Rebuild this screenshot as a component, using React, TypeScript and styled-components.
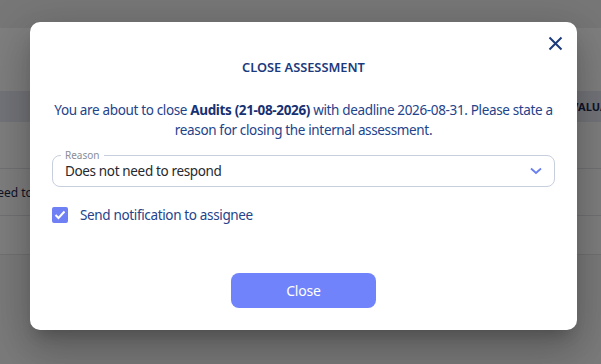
import React from "react";
import styled, { createGlobalStyle } from "styled-components";

/** Global */
const GlobalStyle = createGlobalStyle`
  html, body {
    margin: 0;
    padding: 0;
    width: 601px;
    height: 364px;
    overflow: hidden;
    font-family: "Noto Sans", "Open Sans", sans-serif;
  }
`;

/** Background page */
const Page = styled.div`
  position: relative;
  width: 601px;
  height: 364px;
  background: #f6f6f8;
  display: flex;
  flex-direction: column;
`;

const TopBar = styled.div`
  height: 28px;
  background: #eeeeee;
`;

const Gap = styled.div`
  height: 63px;
  background: #ffffff;
`;

const Table = styled.div`
  display: flex;
  flex-direction: column;
  background: #ffffff;
`;

const HeaderRow = styled.div`
  height: 31px;
  background: #e9ebf5;
  display: flex;
  align-items: center;
  justify-content: flex-end;
  font-size: 11px;
  font-weight: 700;
  color: #1e2a55;
  white-space: nowrap;
  overflow: hidden;
`;

const Row = styled.div`
  height: 46px;
  border-bottom: 1px solid #e4e4e8;
  display: flex;
  align-items: center;
  font-size: 12px;
  color: #1f2b50;
  white-space: nowrap;
  overflow: hidden;

  &:last-child {
    height: 38px;
  }
`;

const Clipped = styled.span<{ $side: "left" | "right" }>`
  ${(p) => (p.$side === "left" ? "margin-left: -64px;" : "margin-right: -34px;")}
`;

const Overlay = styled.div`
  position: absolute;
  inset: 0;
  background: rgba(0, 0, 0, 0.5);
`;

/** Dialog */
const Dialog = styled.div`
  position: absolute;
  left: 30px;
  top: 22px;
  width: 547px;
  height: 308px;
  box-sizing: border-box;
  background: #ffffff;
  border-radius: 10px;
  padding: 36px 22px 22px;
  display: flex;
  flex-direction: column;
  align-items: center;
  letter-spacing: -0.35px;
  box-shadow: 0 11px 15px -7px rgba(0, 0, 0, 0.2),
    0 24px 38px 3px rgba(0, 0, 0, 0.14), 0 9px 46px 8px rgba(0, 0, 0, 0.12);
`;

const CloseIcon = styled.button`
  position: absolute;
  top: 9px;
  right: 10px;
  width: 24px;
  height: 24px;
  border: none;
  background: none;
  padding: 0;
  display: flex;
  align-items: center;
  justify-content: center;
  cursor: pointer;
`;

const Title = styled.div`
  font-size: 12.8px;
  line-height: 18px;
  font-weight: 600;
  letter-spacing: 0;
  color: #1c3a7c;
`;

const Message = styled.p`
  margin: 25px 0 0;
  font-size: 13.5px;
  line-height: 19.5px;
  color: #23438b;
  text-align: center;

  b {
    font-weight: 700;
    color: #173172;
  }
`;

const Field = styled.div`
  position: relative;
  margin-top: 15px;
  width: 100%;
  height: 32px;
  box-sizing: border-box;
  border: 1px solid #c7cede;
  border-radius: 8px;
  display: flex;
  align-items: center;
  padding: 0 12px;
`;

const Legend = styled.span`
  position: absolute;
  top: -8px;
  left: 8px;
  padding: 0 4px;
  background: #ffffff;
  font-size: 10px;
  line-height: 14px;
  letter-spacing: 0;
  color: #8a8d96;
`;

const Value = styled.span`
  flex: 1;
  font-size: 13.5px;
  color: #26282e;
`;

const CheckRow = styled.label`
  margin-top: 19px;
  align-self: flex-start;
  display: flex;
  align-items: center;
  gap: 12px;
  font-size: 13.5px;
  color: #23438b;
`;

const Box = styled.span`
  width: 16px;
  height: 16px;
  border-radius: 2px;
  background: #6f80f4;
  display: flex;
  align-items: center;
  justify-content: center;
`;

const Button = styled.button`
  margin-top: auto;
  width: 145px;
  height: 35px;
  border: none;
  border-radius: 8px;
  background: #7083fa;
  color: #ffffff;
  font-family: inherit;
  font-size: 14px;
  letter-spacing: -0.2px;
  cursor: pointer;
`;

const App = () => (
  <>
    <GlobalStyle />
    <Page>
      <TopBar />
      <Gap />
      <Table>
        <HeaderRow>
          <Clipped $side="right">EVALUATION</Clipped>
        </HeaderRow>
        <Row />
        <Row>
          <Clipped $side="left">Does not need to</Clipped>
        </Row>
        <Row />
      </Table>
      <Overlay />
      <Dialog>
        <CloseIcon aria-label="close">
          <svg width="15" height="15" viewBox="0 0 15 15">
            <path
              d="M1.5 1.5 L13.5 13.5 M13.5 1.5 L1.5 13.5"
              stroke="#1c3a7c"
              strokeWidth="2"
              fill="none"
            />
          </svg>
        </CloseIcon>
        <Title>CLOSE ASSESSMENT</Title>
        <Message>
          You are about to close <b>Audits (21-08-2026)</b> with deadline
          2026-08-31. Please state a reason for closing the internal
          assessment.
        </Message>
        <Field>
          <Legend>Reason</Legend>
          <Value>Does not need to respond</Value>
          <svg width="12" height="8" viewBox="0 0 12 8">
            <path
              d="M1 1.5 L6 6 L11 1.5"
              stroke="#6a7ff0"
              strokeWidth="1.8"
              fill="none"
            />
          </svg>
        </Field>
        <CheckRow>
          <Box>
            <svg width="12" height="10" viewBox="0 0 12 10">
              <path
                d="M1.5 5 L4.5 8 L10.5 1.5"
                stroke="#ffffff"
                strokeWidth="2"
                fill="none"
              />
            </svg>
          </Box>
          Send notification to assignee
        </CheckRow>
        <Button>Close</Button>
      </Dialog>
    </Page>
  </>
);

export default App;
